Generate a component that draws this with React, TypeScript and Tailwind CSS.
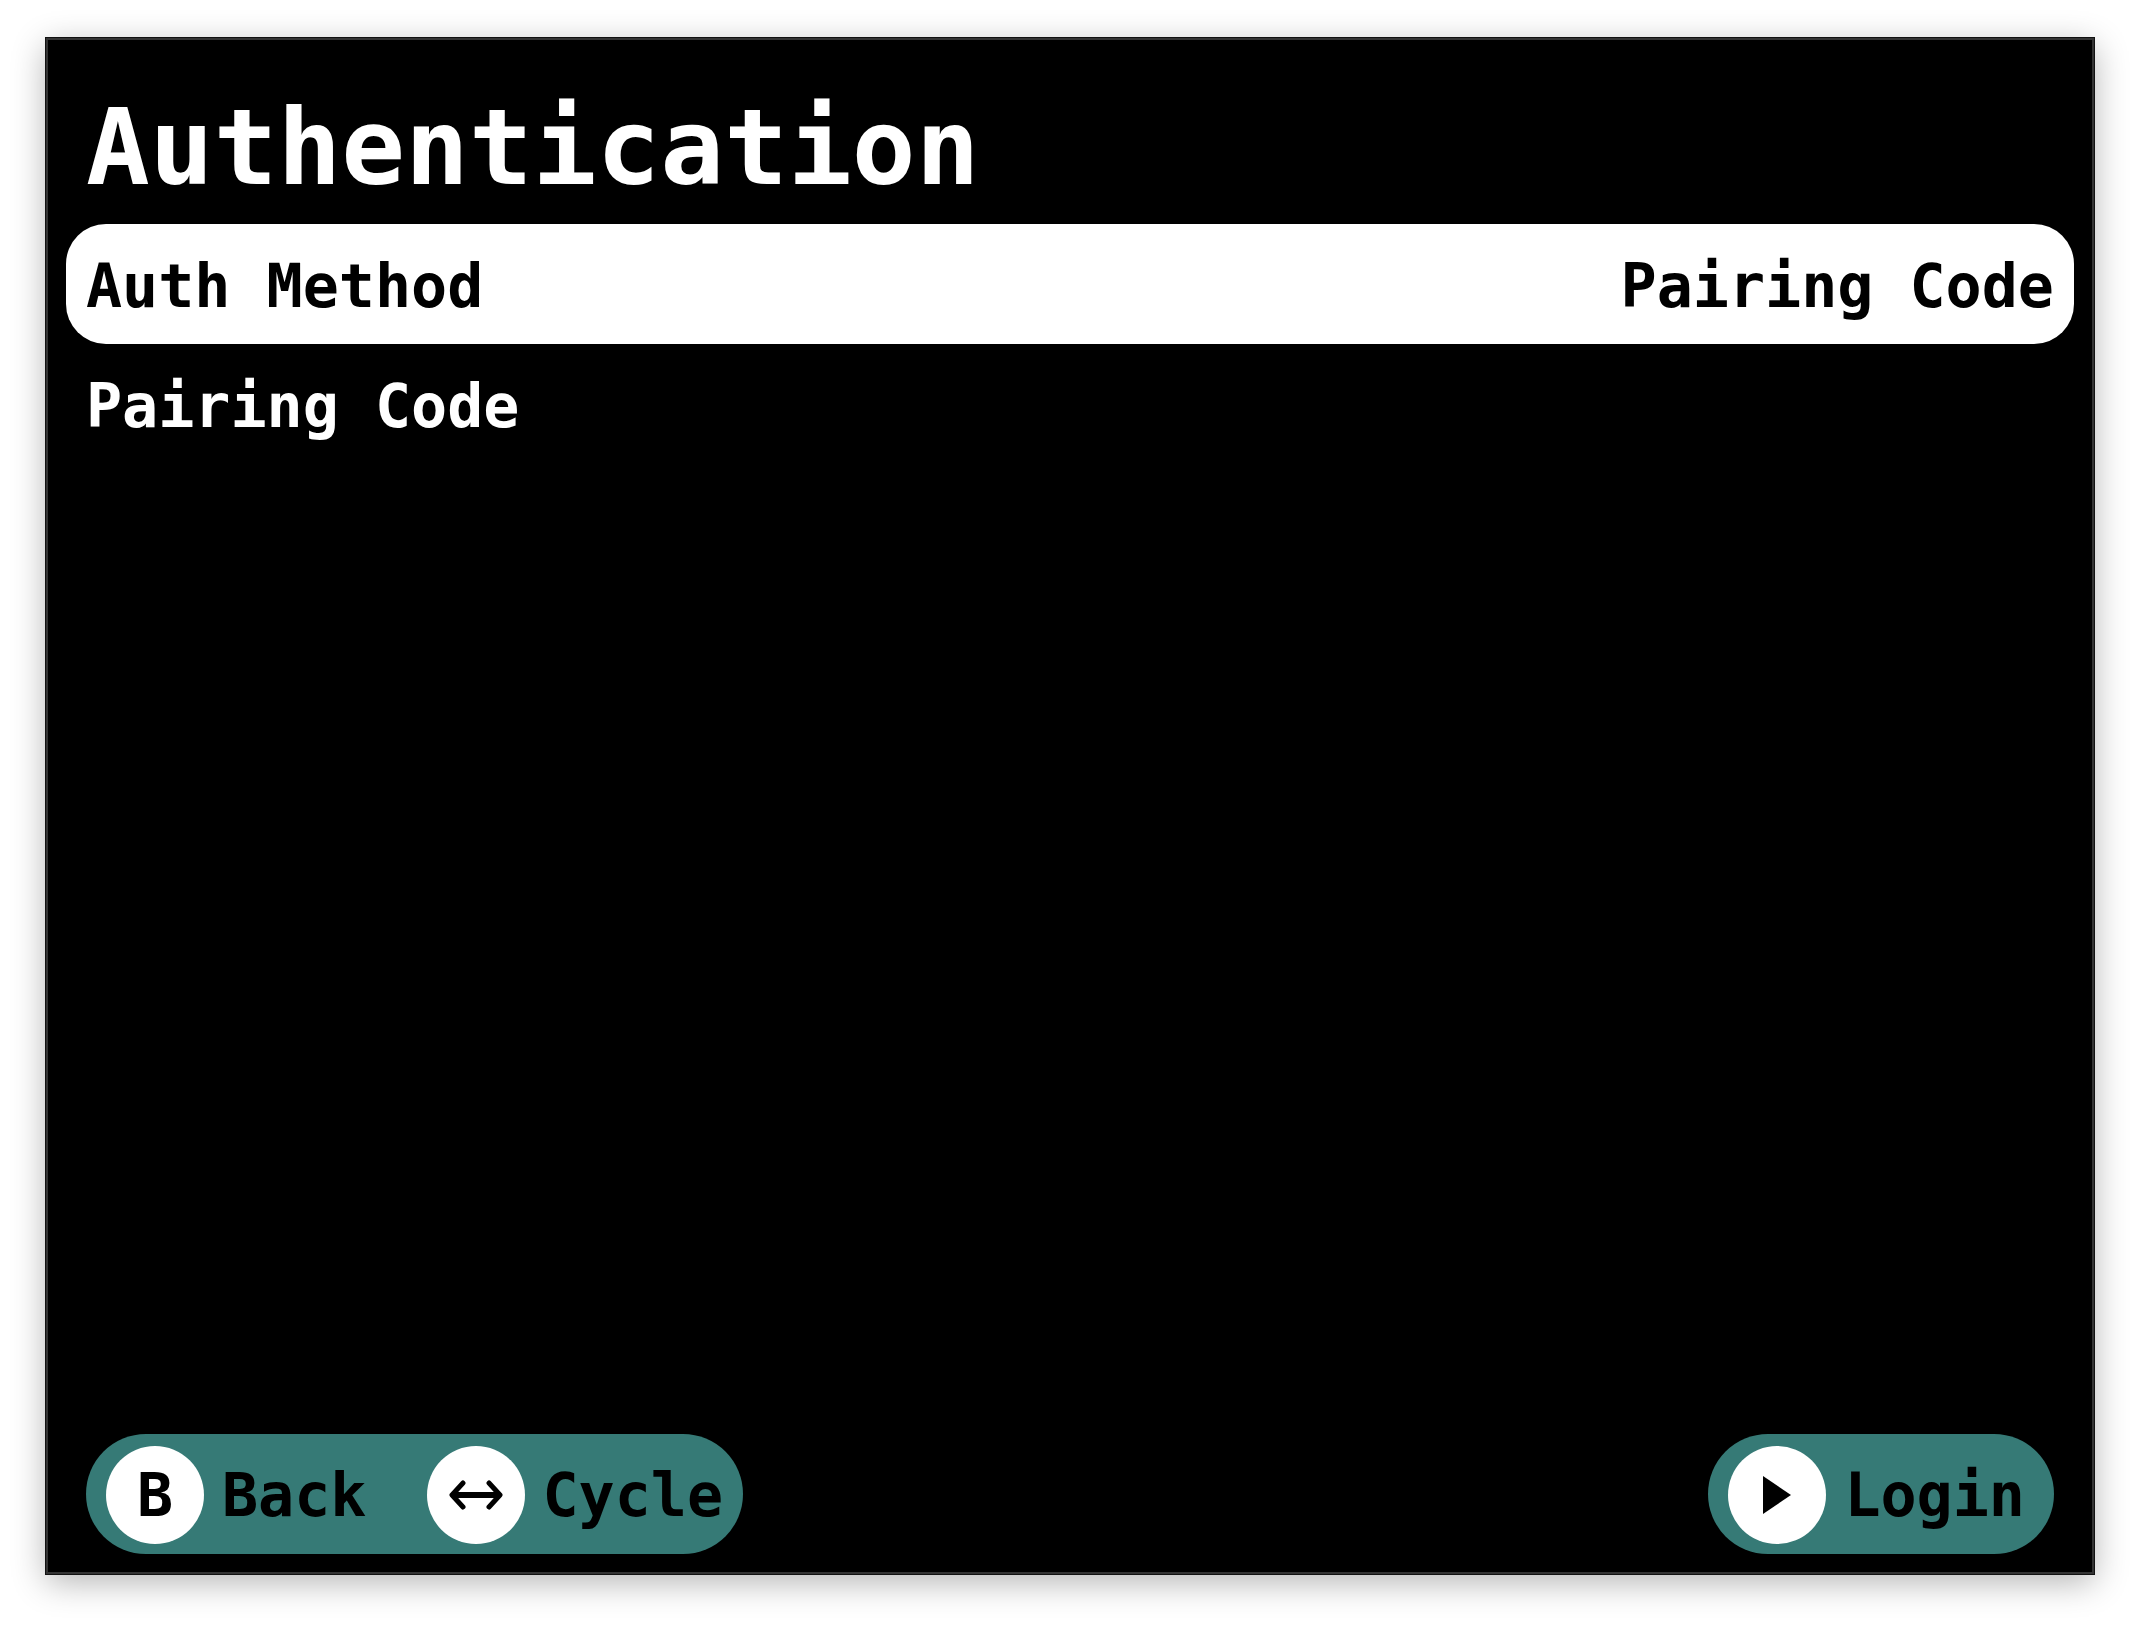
import type { ReactNode } from "react";

function ArrowIcon() {
  return (
    <svg width="54" height="30" viewBox="0 0 54 30" fill="none" stroke="currentColor" aria-hidden="true">
      <path d="M4 15H50" strokeWidth="6" />
      <path d="M14 3L3 15L14 27M40 3L51 15L40 27" strokeWidth="5" strokeLinecap="round" strokeLinejoin="round" />
    </svg>
  );
}

function PlayIcon() {
  return (
    <svg width="28" height="38" viewBox="0 0 28 38" fill="currentColor" aria-hidden="true">
      <path d="M0 0L28 19L0 38Z" />
    </svg>
  );
}

function Hint({ badge, label }: { badge: ReactNode; label: string }) {
  return (
    <button type="button" className="flex items-center gap-[18px]">
      <span className="flex size-[98px] shrink-0 items-center justify-center rounded-full bg-white">{badge}</span>
      <span>{label}</span>
    </button>
  );
}

function Row({ label, value, selected }: { label: string; value?: string; selected?: boolean }) {
  return (
    <li>
      <button
        type="button"
        aria-current={selected}
        className={
          selected
            ? "flex h-[120px] w-full items-center justify-between rounded-[40px] bg-white px-5 pt-[3px] text-black"
            : "flex h-[120px] w-full items-center justify-between rounded-[40px] px-5 pt-[3px] text-white"
        }
      >
        <span>{label}</span>
        {value && <span>{value}</span>}
      </button>
    </li>
  );
}

export default function App() {
  return (
    <div className="flex min-h-screen bg-white px-[46px] pt-[38px] pb-[54px] font-['DejaVu_Sans_Mono',monospace] text-[60px] leading-[72px] font-bold">
      <main className="flex flex-1 flex-col border-2 border-[#333333] bg-black px-[18px] pt-9 pb-[18px] shadow-[0_0_0_1px_#111111,0_8px_32px_rgba(0,0,0,0.3)]">
        <h1 className="px-5 pb-1 text-[106px] leading-[144px] text-white">Authentication</h1>
        <ul>
          <Row label="Auth Method" value="Pairing Code" selected />
          <Row label="Pairing Code" />
        </ul>
        <footer className="mt-auto flex items-center justify-between px-5 text-black">
          <div className="flex h-[120px] items-center gap-[60px] rounded-full bg-[#367a76] px-5 pt-px">
            <Hint badge="B" label="Back" />
            <Hint badge={<ArrowIcon />} label="Cycle" />
          </div>
          <div className="flex h-[120px] items-center rounded-full bg-[#367a76] pt-px pr-[29px] pl-5">
            <Hint badge={<PlayIcon />} label="Login" />
          </div>
        </footer>
      </main>
    </div>
  );
}
